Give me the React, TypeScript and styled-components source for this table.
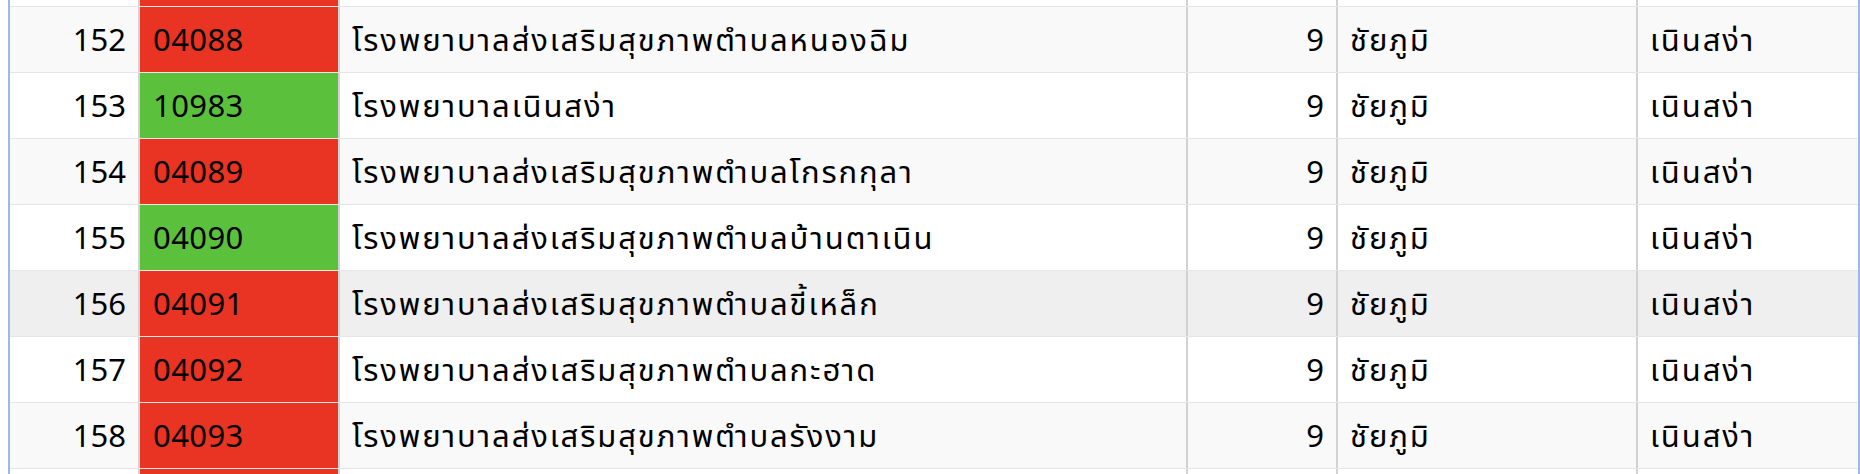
import * as React from 'react';
import styled, { createGlobalStyle } from 'styled-components';

const GlobalStyle = createGlobalStyle`
  html, body {
    margin: 0;
    padding: 0;
    background: #ffffff;
    overflow: hidden;
  }
  body {
    font-family: Tahoma, "Noto Sans Thai", "Liberation Sans", "Noto Sans", "DejaVu Sans", sans-serif;
  }
`;

interface Unit {
  no: number;
  code: string;
  name: string;
  region: number;
  province: string;
  district: string;
  ok: boolean;
}

const units: Array<Unit> = [
  { no: 151, code: '04087', name: 'โรงพยาบาลส่งเสริมสุขภาพตำบลโนนสะอาด', region: 9, province: 'ชัยภูมิ', district: 'เนินสง่า', ok: false },
  { no: 152, code: '04088', name: 'โรงพยาบาลส่งเสริมสุขภาพตำบลหนองฉิม', region: 9, province: 'ชัยภูมิ', district: 'เนินสง่า', ok: false },
  { no: 153, code: '10983', name: 'โรงพยาบาลเนินสง่า', region: 9, province: 'ชัยภูมิ', district: 'เนินสง่า', ok: true },
  { no: 154, code: '04089', name: 'โรงพยาบาลส่งเสริมสุขภาพตำบลโกรกกุลา', region: 9, province: 'ชัยภูมิ', district: 'เนินสง่า', ok: false },
  { no: 155, code: '04090', name: 'โรงพยาบาลส่งเสริมสุขภาพตำบลบ้านตาเนิน', region: 9, province: 'ชัยภูมิ', district: 'เนินสง่า', ok: true },
  { no: 156, code: '04091', name: 'โรงพยาบาลส่งเสริมสุขภาพตำบลขี้เหล็ก', region: 9, province: 'ชัยภูมิ', district: 'เนินสง่า', ok: false },
  { no: 157, code: '04092', name: 'โรงพยาบาลส่งเสริมสุขภาพตำบลกะฮาด', region: 9, province: 'ชัยภูมิ', district: 'เนินสง่า', ok: false },
  { no: 158, code: '04093', name: 'โรงพยาบาลส่งเสริมสุขภาพตำบลรังงาม', region: 9, province: 'ชัยภูมิ', district: 'เนินสง่า', ok: false },
  { no: 159, code: '04094', name: 'โรงพยาบาลส่งเสริมสุขภาพตำบลตะโกทอง', region: 9, province: 'ชัยภูมิ', district: 'เนินสง่า', ok: false },
];

const HOVER_ROW = 156;

const Viewport = styled.div`
  height: 474px;
  overflow: hidden;
  margin-left: 8px;
  width: 1848px;
  border-left: 2px solid #9fb7e8;
  border-right: 2px solid #9fb7e8;
`;

const Sheet = styled.div`
  display: flex;
  flex-direction: column;
  margin-top: -59px;
`;

const Row = styled.div<{ $tone: 'plain' | 'stripe' | 'hover' }>`
  display: grid;
  grid-template-columns: 130px 200px 848px 150px 300px 220px;
  height: 65px;
  border-bottom: 1px solid #e6e6e6;
  background: ${p => (p.$tone === 'hover' ? '#efefef' : p.$tone === 'stripe' ? '#f9f9f9' : '#ffffff')};
  font-size: 31px;
  color: #000000;
`;

const Cell = styled.div<{ $align?: 'left' | 'right'; $last?: boolean; $thai?: boolean }>`
  display: flex;
  align-items: center;
  justify-content: ${p => (p.$align === 'right' ? 'flex-end' : 'flex-start')};
  padding: 4px 12px 0;
  border-right: ${p => (p.$last ? 'none' : '2px solid #d2d2d2')};
  letter-spacing: ${p => (p.$thai ? '1.9px' : '0')};
  white-space: nowrap;
  overflow: hidden;
`;

const CodeCell = styled(Cell)<{ $ok: boolean }>`
  background: ${p => (p.$ok ? '#5bc13c' : '#e93323')};
  padding-left: 13px;
  letter-spacing: 0.4px;
`;

export default function App() {
  return (
    <>
      <GlobalStyle />
      <Viewport>
        <Sheet>
          {units.map(u => (
            <Row key={u.no} $tone={u.no === HOVER_ROW ? 'hover' : u.no % 2 === 0 ? 'stripe' : 'plain'}>
              <Cell $align="right">{u.no}</Cell>
              <CodeCell $ok={u.ok}>{u.code}</CodeCell>
              <Cell $thai>{u.name}</Cell>
              <Cell $align="right">{u.region}</Cell>
              <Cell $thai>{u.province}</Cell>
              <Cell $thai $last>{u.district}</Cell>
            </Row>
          ))}
        </Sheet>
      </Viewport>
    </>
  );
}
